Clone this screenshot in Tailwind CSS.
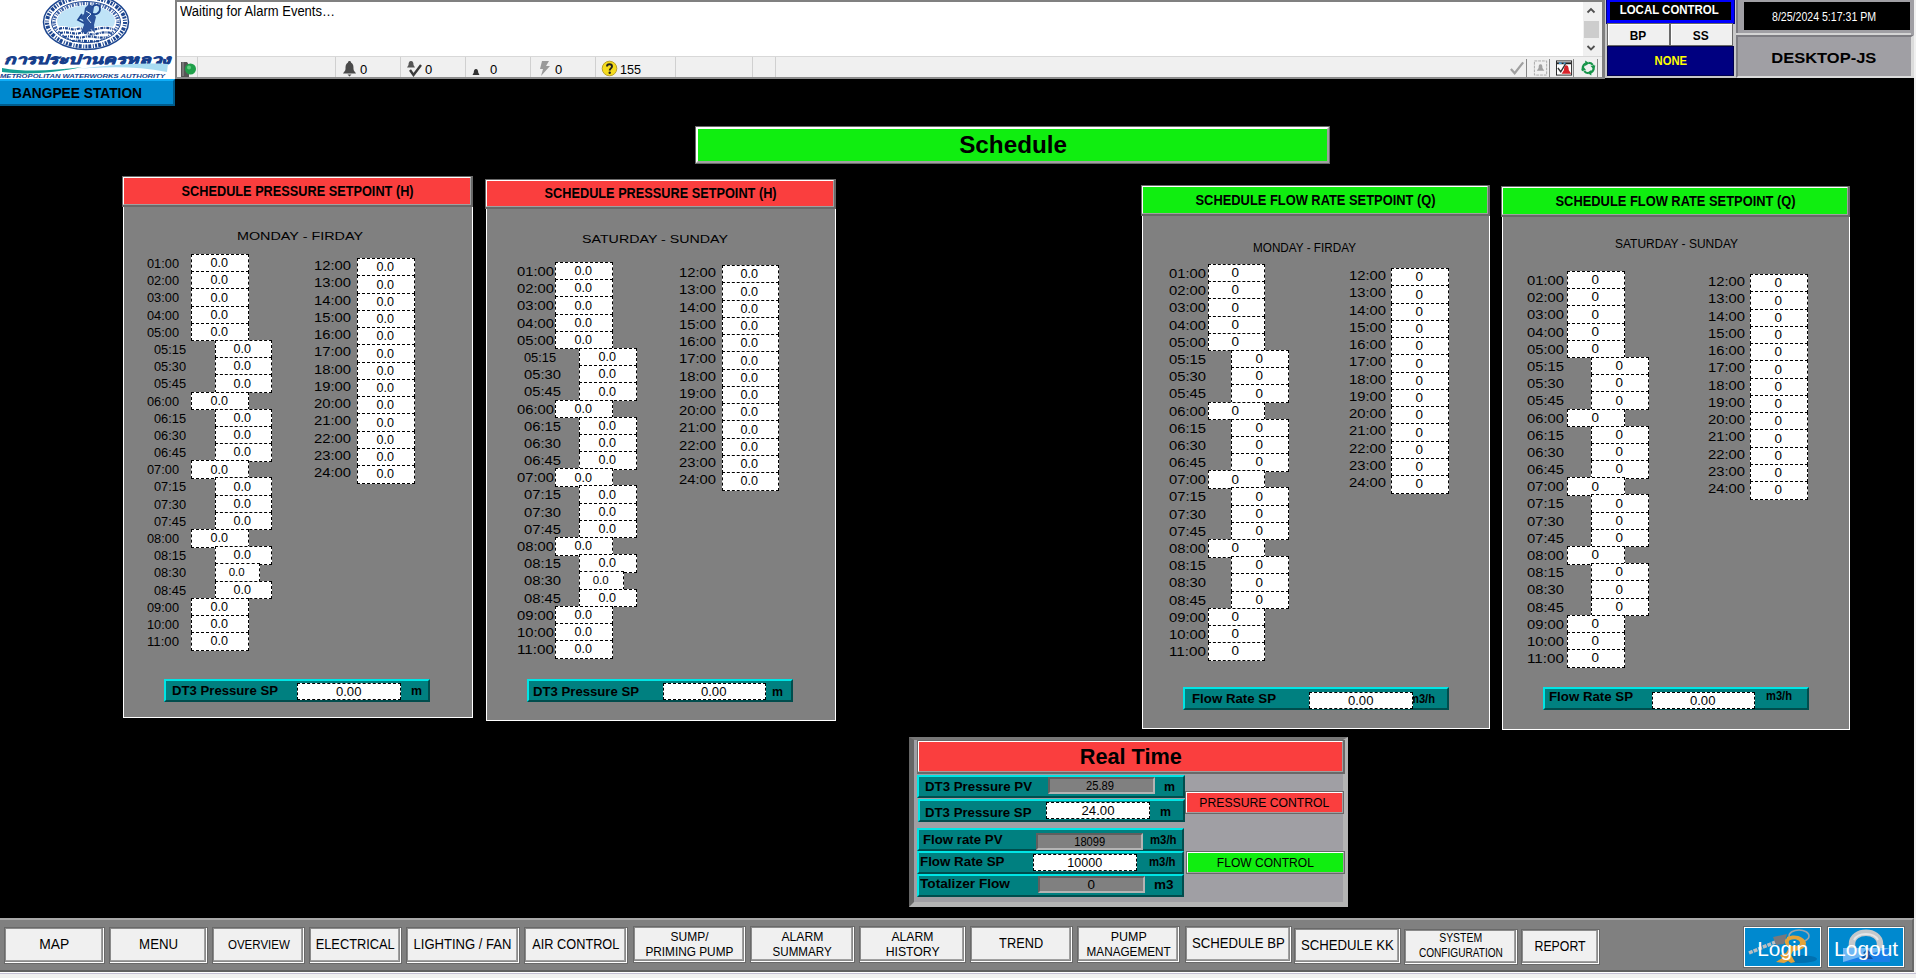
<!DOCTYPE html>
<html lang="en">
<head>
<meta charset="utf-8">
<title>Schedule - Bangpee Station</title>
<script src="https://cdn.jsdelivr.net/npm/@tailwindcss/browser@4"></script>
</head>
<body class="w-[1916px] h-[978px] overflow-hidden bg-[#f0f0f0] font-['Liberation_Sans',Arial,sans-serif] text-black text-xs">
<div class="flex flex-col w-[1914px] h-[972px] bg-black">

  <!-- Top strip -->
  <header class="flex h-[79px] shrink-0 items-start">
    <div class="w-[175px] h-[79px] bg-white overflow-hidden shrink-0">
      <svg width="175" height="79" viewBox="0 0 175 79" font-family="'Liberation Sans','Noto Sans',sans-serif">
        <ellipse cx="86" cy="22" rx="42.5" ry="27.5" fill="#fff" stroke="#1d4690" stroke-width="1.5"/>
        <ellipse cx="86" cy="22" rx="39" ry="24.5" fill="none" stroke="#1d4690" stroke-width="4" stroke-dasharray="2 1.2 1 1.6 3 1"/>
        <ellipse cx="86" cy="22" rx="34.5" ry="20.5" fill="none" stroke="#1d4690" stroke-width="1"/>
        <ellipse cx="86" cy="22" rx="32" ry="18.5" fill="none" stroke="#3d62a6" stroke-width="3.5" stroke-dasharray="1 1 2 1.5"/>
        <ellipse cx="86" cy="21" rx="29" ry="15.5" fill="#bfe3f7"/>
        <path d="M57 27c8-3 12 2 18 0s10 3 16 1 14-3 23-1c-4 10-16 15-28 15s-24-5-29-15z" fill="#fff"/>
        <path d="M59 29c8-3 12 2 18 0s10 3 16 1 13-3 20-1M60 33c8-2 14 2 20 0s10 3 16 1 11-2 16-1M64 37c8-2 14 2 20 0s14 2 22 0M72 41c8-1 18 1 28 0" fill="none" stroke="#1d4690" stroke-width="2.200" stroke-dasharray="3 1 1 1"/>
        <path d="M85 8l4-4 5 3-1 6 3 4-2 8 1 8-4-4-4 4-6-1 3-7-1-5-4-2 5-4z" fill="#2c539b"/>
        <path d="M90 13c6 3 10 0 10-4s-3-6-8-2M82 14l-4 6 6 3" fill="none" stroke="#1d4690" stroke-width="1.8"/>
        <path d="M86 11l5 3-4 4 4 5" fill="none" stroke="#dff0fa" stroke-width="1"/>
        <text x="4" y="63.500" font-size="13" font-weight="700" font-style="italic" fill="#173f8c" stroke="#173f8c" stroke-width=".7" textLength="166" lengthAdjust="spacingAndGlyphs">การประปานครหลวง</text>
        <path d="M2 68c22 4 50 3 80-1-26 6-58 8-80 5z" fill="#14a095"/>
        <path d="M62 70c35-2 62-8 106-6l-1 8c-36-7-66-5-105-2z" fill="#a8dcf2"/>
        <text x="0" y="77.500" font-size="6" font-weight="700" font-style="italic" fill="#173f8c" textLength="165" lengthAdjust="spacingAndGlyphs">METROPOLITAN WATERWORKS AUTHORITY</text>
      </svg>
    </div>

    <!-- Alarm summary -->
    <section class="flex flex-col w-[1430px] h-[79px] shrink-0 bg-[#f0f0f0] border-t-2 border-l-2 border-[#808080] border-b-2 border-b-[#8c8c8c] border-r-[3px]">
      <div class="flex h-[54px]">
        <div class="flex-1 bg-white pl-[3px] pt-[2px] leading-[15px] text-[14px]"><span data-fit="154" class="inline-block whitespace-nowrap origin-left">Waiting for Alarm Events…</span></div>
        <div class="flex flex-col items-center justify-between w-[19px] pr-[3px] bg-[#f0f0f0]">
          <svg width="16" height="17" viewBox="0 0 16 17"><path d="M4.500 10.500L8 7l3.500 3.500" fill="none" stroke="#505050" stroke-width="1.800"/></svg>
          <div class="w-[15px] h-[17px] bg-[#cdcdcd]"></div>
          <svg width="16" height="17" viewBox="0 0 16 17"><path d="M4.500 7L8 10.500 11.500 7" fill="none" stroke="#505050" stroke-width="1.800"/></svg>
        </div>
      </div>
      <div class="flex h-[21px] border-t border-[#d8d8d8] text-[13px] leading-[25px] overflow-hidden">
        <div class="w-[21px] border-r border-[#d0d0d0] pl-[3px] pt-[3px]">
          <svg width="17" height="17" viewBox="0 0 17 17"><path d="M1 2h6l2 3v12H1z" fill="#555"/><path d="M3 2v14" stroke="#999"/><circle cx="10.500" cy="9" r="5.500" fill="#1fa04a"/><circle cx="9" cy="7.500" r="2" fill="#5fd07f"/></svg>
        </div>
        <div class="w-[138px] border-r border-[#d0d0d0]"></div>
        <div class="flex w-[65px] border-r border-[#d0d0d0] pl-[6px]">
          <svg class="mt-[4px]" width="15" height="16" viewBox="0 0 15 16"><path d="M7.500 0c1 0 1.500.7 1.500 1.500C11.500 3 11.500 5 11.500 8c0 2 1.500 2.500 2.500 4.500H1C2 10.500 3.500 10 3.500 8c0-3 0-5 2.500-6.500C6 .7 6.500 0 7.500 0zM5.500 13.500h4L7.500 15.500z" fill="#4a4a4a"/></svg>
          <span class="ml-[3px]">0</span>
        </div>
        <div class="flex w-[65px] border-r border-[#d0d0d0] pl-[6px]">
          <svg class="mt-[4px]" width="15" height="16" viewBox="0 0 15 16"><path d="M4 0c2 0 2.500 2 2.500 4L8 6.500H0L1.500 4C1.500 2 2 0 4 0z" fill="#555"/><path d="M3 9l3.500 5L14 4" fill="none" stroke="#3c3c3c" stroke-width="2.400"/></svg>
          <span class="ml-[3px]">0</span>
        </div>
        <div class="flex w-[65px] border-r border-[#d0d0d0] pl-[6px]">
          <svg class="mt-[4px]" width="15" height="16" viewBox="0 0 15 16"><path d="M4 8c1.800 0 2.200 2 2.200 3.500L7.500 14h-7l1.300-2.500C1.800 10 2.200 8 4 8z" fill="#333"/></svg>
          <span class="ml-[3px]">0</span>
        </div>
        <div class="flex w-[65px] border-r border-[#d0d0d0] pl-[7px]">
          <svg class="mt-[4px]" width="14" height="16" viewBox="0 0 14 16"><path d="M4 0h7L8 5h4L3 15l2-7H2z" fill="#9a9a9a"/></svg>
          <span class="ml-[3px]">0</span>
        </div>
        <div class="flex w-[80px] border-r border-[#d0d0d0] pl-[5px]">
          <svg class="mt-[3px]" width="17" height="17" viewBox="0 0 17 17"><circle cx="8.500" cy="8.500" r="7.300" fill="#f5dc1e" stroke="#b9a02a"/><path d="M6 6.500C6 3.500 11 3.500 11 6.500c0 2-2.300 1.800-2.300 4" fill="none" stroke="#222" stroke-width="1.900"/><circle cx="8.700" cy="12.800" r="1.200" fill="#222"/></svg>
          <span data-fit="20" class="inline-block ml-[2px] origin-left">155</span>
        </div>
        <div class="w-[77px] border-r border-[#d0d0d0]"></div>
        <div class="w-[23px] border-r border-[#d0d0d0]"></div>
        <div class="flex ml-auto gap-[6px] pt-[2px] pr-[4px]">
          <svg class="border-r border-[#888]" width="18" height="18" viewBox="0 0 18 18"><path d="M2 10l4 4.500L15 3" fill="none" stroke="#a0a0a0" stroke-width="2.400"/></svg>
          <svg class="border-r border-[#888]" width="17" height="18" viewBox="0 0 17 18"><rect x="1.500" y="1.500" width="13" height="15" fill="none" stroke="#a8a8a8" stroke-dasharray="3 1"/><path d="M8 5c2 0 2 2 2 4l2 3H4l2-3c0-2 0-4 2-4z" fill="#a0a0a0"/></svg>
          <svg class="border-r border-[#888]" width="18" height="18" viewBox="0 0 18 18"><rect x=".5" y="1.500" width="16" height="15" fill="#fff" stroke="#222"/><path d="M1 4h15" stroke="#222" stroke-width="2"/><path d="M3 4h3m2 0h2" stroke="#4aa3df" stroke-width="1.500"/><path d="M2 9l3 4 5-8" fill="none" stroke="#333" stroke-width="1.500"/><path d="M11 6c2 0 2.500 3 2.500 5l2.500 4H6l2.500-4c0-2 .5-5 2.500-5z" fill="#d8232a"/></svg>
          <svg class="border-r border-[#888]" width="18" height="18" viewBox="0 0 18 18"><path d="M3.500 12A5.800 5.800 0 0 1 6 4.200M14 6a5.800 5.800 0 0 1-2.500 7.800" fill="none" stroke="#169449" stroke-width="2.400"/><path d="M5.500 1v6L10 4zM12 17v-6l-4.500 3z" fill="#169449"/><path d="M9 3.500c2 0 3.500.8 4.600 2.200M9 14.500c-2 0-3.500-.8-4.600-2.200" fill="none" stroke="#169449" stroke-width="2.200"/><path d="M11 6.500h5.500L14 10zM1 11.500h5.500L4 8z" fill="#169449"/></svg>
        </div>
      </div>
    </section>

    <!-- Control mode -->
    <section class="flex flex-col w-[131px] h-[78px] shrink-0 bg-[#c8c8c8] pl-[2px]">
      <div class="flex items-center justify-center w-[127px] h-[23px] bg-black border-[3px] border-t-[2px] border-[#0000ff] outline outline-[#000080] text-white text-[13px] font-bold pb-[2px] pr-[2px]"><span data-fit="98" class="inline-block whitespace-nowrap">LOCAL CONTROL</span></div>
      <div class="flex w-[126px] h-[23px] bg-[#696969] gap-[2px] pt-[1px] px-px text-[13px] font-bold">
        <div class="flex items-center justify-center w-[61px] h-[21px] bg-[#f0f0f0] border-t border-l border-white pt-[2px] pr-[2px]"><span data-fit="15.500" class="inline-block">BP</span></div>
        <div class="flex items-center justify-center w-[61px] h-[21px] bg-[#f0f0f0] border-t border-l border-white pt-[2px] pr-[2px]"><span data-fit="15" class="inline-block">SS</span></div>
      </div>
      <div class="flex items-center justify-center w-[127px] h-[30px] bg-[#000080] border border-[#00004d] text-[#ffff00] text-[13px] font-bold"><span data-fit="31.500" class="inline-block">NONE</span></div>
    </section>

    <!-- Clock and host -->
    <section class="flex flex-col w-[178px] h-[78px] shrink-0 bg-[#a09fa4]">
      <div class="flex h-[33px] border-l-2 border-[#7d7c82] pl-[6px] pt-[2px]">
        <div class="flex items-center justify-center w-[166px] h-[28px] bg-black text-white pt-[2px] pr-[6px]"><span data-fit="103" class="inline-block whitespace-nowrap">8/25/2024 5:17:31 PM</span></div>
      </div>
      <div class="h-[2px] bg-[#d4d4d4] mr-[3px]"></div>
      <div class="flex items-center justify-center h-[43px] border-t-2 border-l-2 border-[#7d7c82] border-b-2 border-b-[#dcdcdc] border-r-[3px] border-r-[#dcdcdc] text-[15px] font-bold pt-[3px] pr-[2px]"><span data-fit="104" class="inline-block whitespace-nowrap">DESKTOP-JS</span></div>
    </section>
  </header>

  <!-- Drawing area -->
  <main class="flex flex-col h-[839px] shrink-0 items-start">
    <div class="flex items-start h-[85px]">
      <div class="flex items-center w-[175px] h-[27px] bg-[#0089cf] border-t-2 border-t-[#10aef8] border-r-2 border-b-2 border-[#005c8c] pl-[12px] font-bold text-[14px] pt-px"><span data-fit="129" class="inline-block whitespace-nowrap origin-left">BANGPEE STATION</span></div>
      <div class="flex items-center justify-center w-[635px] h-[38px] ml-[520px] mt-[47px] bg-[#696969] p-px"><div class="flex items-center justify-center w-full h-full border-2 border-white border-r-[#a0a0a0] border-b-[#a0a0a0] bg-[#10ee10] text-[23px] font-bold pt-px pl-px"><span data-fit="107" class="inline-block">Schedule</span></div></div>
    </div>
    <div id="panels" class="flex items-start h-[566px]"></div>

    <!-- Real time -->
    <section class="ml-[909px] mt-[7px] w-[439px] h-[170px] bg-[#a09fa4] border-l-[5px] border-t-[3px] border-r-[5px] border-b-[5px] border-l-[#666] border-t-[#777] border-r-[#b4b4b4] border-b-[#b4b4b4] pl-[3px]">
      <div class="w-[428px] h-[34px] bg-[#696969] p-px pb-[2px] pr-[2px]"><div class="flex items-center justify-center h-full border border-white border-r-[#a0a0a0] border-b-[#a0a0a0] bg-[#fa3e3e] text-[22px] font-bold"><span data-fit="101" class="inline-block whitespace-nowrap">Real Time</span></div></div>
      <div class="flex">
        <div id="live" class="flex flex-col w-[268px] pt-px shrink-0"></div>
        <div class="flex flex-col pt-[17px] text-[13px]">
          <div class="w-[159px] h-[23px] bg-[#696969] p-px"><div class="flex items-center justify-center h-full border border-white border-r-[#a0a0a0] border-b-[#a0a0a0] bg-[#fa3e3e]"><span data-fit="129" class="inline-block whitespace-nowrap">PRESSURE CONTROL</span></div></div>
          <div class="w-[159px] h-[23px] mt-[37px] ml-px bg-[#696969] p-px"><div class="flex items-center justify-center h-full border border-white border-r-[#a0a0a0] border-b-[#a0a0a0] bg-[#10ee10]"><span data-fit="96" class="inline-block whitespace-nowrap">FLOW CONTROL</span></div></div>
        </div>
      </div>
    </section>
  </main>

  <!-- Navigation -->
  <nav class="flex items-start h-[54px] shrink-0 w-[1914px] bg-[#808080] border-t-2 border-[#a8a8a8] border-b-2 border-b-[#5f5f5f] border-r-2 border-r-[#696969] text-[14px] leading-[15px] text-center">
    <div id="nav" class="flex items-start"></div>
    <div class="flex ml-auto mt-[6px] mr-[7px] gap-[5px]">
      <div class="w-[79px] h-[42px] p-px bg-[#696969]"><div class="grid h-full border border-white bg-[#0089cf] place-items-center overflow-hidden">
        <svg class="col-start-1 row-start-1" width="75" height="38" viewBox="0 0 75 38"><ellipse cx="54" cy="31" rx="18" ry="4" fill="#0070b0"/><ellipse cx="54" cy="8" rx="10" ry="6" fill="none" stroke="#9aa4ab" stroke-width="1.500"/><path d="M4 25L40 10" stroke="#b9bec2" stroke-width="3.500" stroke-dasharray="4 1"/><path d="M28 9l14-3-3 10-8 1z" fill="#78787c"/><path d="M42 9c8-4 18 0 19 6 0 6-8 8-13 8l-2 4 4 7-4 1-3-2-4 2-8-1 6-4-2-3 6-2 3-5c-4-3-6-7-2-10z" fill="#e3a33a"/><path d="M45 12c5-2 10 0 10 3s-6 3-8 3-5-4-2-6z" fill="#0089cf"/></svg>
        <span data-fit="50" class="col-start-1 row-start-1 inline-block text-white text-[21px] leading-none pt-[3px]">Login</span>
      </div></div>
      <div class="w-[78px] h-[42px] p-px bg-[#696969]"><div class="grid h-full border border-white bg-[#0089cf] place-items-center overflow-hidden">
        <svg class="col-start-1 row-start-1" width="74" height="38" viewBox="0 0 74 38"><path d="M23 22v-6c0-15 28-15 28 0v6" fill="none" stroke="#c4c8cb" stroke-width="6.500"/><path d="M25 12c4-8 20-8 24 0" fill="none" stroke="#e4e6e8" stroke-width="2"/><rect x="14" y="20" width="47" height="14" fill="#1b7fe8"/><path d="M14 20h47L14 34z" fill="#6fb8f4"/><path d="M38 21l4 4-2 1 4 5H32l4-5-2-1z" fill="#14509c"/></svg>
        <span data-fit="63" class="col-start-1 row-start-1 inline-block text-white text-[21px] leading-none pt-[3px]">Logout</span>
      </div></div>
    </div>
  </nav>
</div>
<div class="h-px w-[1914px] bg-white"></div>
<div class="h-px w-full bg-[#c4c0d4]"></div>

<script>
const fit = (text, width, cls) => `<span data-fit="${width}" class="inline-block whitespace-nowrap ${cls || ''}">${text}</span>`;

const morning = ['01:00','02:00','03:00','04:00','05:00','05:15','05:30','05:45','06:00','06:15','06:30','06:45','07:00','07:15','07:30','07:45','08:00','08:15','08:30','08:45','09:00','10:00','11:00'];
const evening = ['12:00','13:00','14:00','15:00','16:00','17:00','18:00','19:00','20:00','21:00','22:00','23:00','24:00'];

const panels = [
  { box: 'ml-[122px] mt-[12px] h-[542px] w-[351px]', head: 'h-[31px]', fill: 'bg-[#fa3e3e]', title: 'SCHEDULE PRESSURE SETPOINT (H)', tw: 231,
    day: 'MONDAY - FIRDAY', dayCls: 'ml-[113px] mt-[22px] text-[10px]', dw: 125, v: '0.0', vw: 16.5,
    a: 'mt-[11px] w-[190px]', hour: 'ml-[23px] w-[44px]', hourW: 31, quarter: 'ml-[30px] w-[61px]', quarterW: 31, boxA: 'w-[58px]', boxQ: 'w-[57px]',
    b: 'mt-[15px]', late: 'w-[43px]', boxB: 'w-[58px]', firstQuarterW: 31, short: true,
    sp: 'mb-[15px]', name: 'DT3 Pressure SP', nw: 105, nameCls: 'ml-[6px] w-[125px]', inp: 'w-[104px] mt-[2px]', unit: 'm', uw: 10, unitCls: 'ml-[10px]' },
  { box: 'ml-[12px] mt-[15px] h-[542px] w-[351px]', head: 'h-[30px]', fill: 'bg-[#fa3e3e]', title: 'SCHEDULE PRESSURE SETPOINT (H)', tw: 231,
    day: 'SATURDAY - SUNDAY', dayCls: 'ml-[95px] mt-[23px] text-[10px]', dw: 145, v: '0.0', vw: 16.5,
    a: 'mt-[16px] w-[192px]', hour: 'ml-[30px] w-[38px]', hourW: 36, quarter: 'ml-[37px] w-[55px]', quarterW: 36, boxA: 'w-[58px]', boxQ: 'w-[58px]',
    b: 'mt-[19px]', late: 'w-[43px]', boxB: 'w-[57px]', firstQuarterW: 31, short: true,
    sp: 'mb-[18px]', name: 'DT3 Pressure SP', nw: 105, nameCls: 'ml-[4px] w-[130px] mt-px', inp: 'w-[103px] mt-[2px]', unit: 'm', uw: 10, unitCls: 'ml-[6px] mt-px' },
  { box: 'ml-[305px] mt-[21px] h-[544px] w-[349px]', head: 'h-[31px]', fill: 'bg-[#10ee10]', title: 'SCHEDULE FLOW RATE SETPOINT (Q)', tw: 239,
    day: 'MONDAY - FIRDAY', dayCls: 'ml-[110px] mt-[25px] text-[12px]', dw: 102, v: '0', vw: 6.5,
    a: 'mt-[9px] w-[206px]', hour: 'ml-[26px] w-[39px]', hourW: 36, quarter: 'ml-[26px] w-[62px]', quarterW: 36, boxA: 'w-[57px]', boxQ: 'w-[58px]',
    b: 'mt-[13px]', late: 'w-[42px]', boxB: 'w-[58px]', firstQuarterW: 36,
    sp: 'mb-[18px]', name: 'Flow Rate SP', nw: 83, nameCls: 'ml-[7px] w-[117px]', inp: 'w-[104px] mt-[3px] z-10', unit: 'm3/h', uw: 25, unitCls: '-ml-[4px]' },
  { box: 'ml-[11px] mt-[22px] h-[544px] w-[349px]', head: 'h-[31px]', fill: 'bg-[#10ee10]', title: 'SCHEDULE FLOW RATE SETPOINT (Q)', tw: 239,
    day: 'SATURDAY - SUNDAY', dayCls: 'ml-[112px] mt-[20px] text-[12px]', dw: 122, v: '0', vw: 6.5,
    a: 'mt-[20px] w-[205px]', hour: 'ml-[24px] w-[40px]', hourW: 36, quarter: 'ml-[24px] w-[64px]', quarterW: 36, boxA: 'w-[58px]', boxQ: 'w-[58px]',
    b: 'mt-[23px]', late: 'w-[42px]', boxB: 'w-[58px]', firstQuarterW: 36,
    sp: 'mb-[19px]', name: 'Flow Rate SP', nw: 83, nameCls: 'ml-[4px] w-[103px] -mt-[2px]', inp: 'w-[103px] mt-[3px]', unit: 'm3/h', uw: 25, unitCls: 'ml-[11px] -mt-[3px]' }
];

const cell = (v, w, cls) => `<div class="flex shrink-0 items-center justify-center h-[18.500px] bg-white border border-dashed border-black pr-[2px] ${cls}">${fit(v, w)}</div>`;

const row = (p, t) => {
  const q = !t.endsWith(':00');
  const small = p.short && t === '08:30';
  const w = t === '05:15' ? p.firstQuarterW : q ? p.quarterW : p.hourW;
  return `<div class="flex h-[17.200px]">
    <div class="shrink-0 h-[20px] leading-[20px] ${q ? p.quarter : p.hour}">${fit(t, w, 'origin-left')}</div>
    ${cell(p.v, small ? 15 : p.vw, small ? 'w-[45px] text-[11px]' : q ? p.boxQ : p.boxA)}
  </div>`;
};

document.getElementById('panels').innerHTML = panels.map(p => `
  <section class="flex flex-col shrink-0 ${p.box}">
    <div class="shrink-0 bg-[#696969] p-px pb-[2px] pr-[2px] ${p.head}"><div class="flex items-center justify-center h-full border border-white border-r-[#a0a0a0] border-b-[#a0a0a0] font-bold text-[14px] pl-[2px] ${p.fill}">${fit(p.title, p.tw)}</div></div>
    <div class="flex flex-col flex-1 ml-px bg-[#808080] border border-t-0 border-white">
      <h2 class="h-[14px] leading-[15px] ${p.dayCls}">${fit(p.day, p.dw, 'origin-left')}</h2>
      <div class="flex items-start h-0">
        <div class="shrink-0 ${p.a}">${morning.map(t => row(p, t)).join('')}</div>
        <div class="shrink-0 ${p.b}">${evening.map(t => `<div class="flex h-[17.270px]"><div class="shrink-0 h-[17px] leading-[17px] ${p.late}">${fit(t, 36, 'origin-left')}</div>${cell(p.v, p.vw, p.boxB)}</div>`).join('')}</div>
      </div>
      <div class="flex items-start w-[266px] h-[23px] mt-auto ml-[40px] bg-[#008080] border-2 border-t-[#00e5e5] border-l-[#00e5e5] border-r-[#004d4d] border-b-[#004d4d] ${p.sp}">
        <div class="shrink-0 font-bold leading-[20px] ${p.nameCls}">${fit(p.name, p.nw, 'origin-left')}</div>
        <div class="relative flex shrink-0 items-center justify-center h-[17px] bg-white border border-dashed border-black pr-px ${p.inp}">${fit('0.00', 24.5)}</div>
        <div class="font-bold leading-[20px] ${p.unitCls}">${fit(p.unit, p.uw, 'origin-left')}</div>
      </div>
    </div>
  </section>`).join('');

const pv = 'bg-[#808080] border-2 border-t-[#5f5f5f] border-l-[#5f5f5f] border-r-[#b4b4b4] border-b-[#b4b4b4] w-[107px]';
const sv = 'bg-white border border-dashed border-black w-[104px]';
const live = [
  ['w-[268px] mb-px', 'DT3 Pressure PV', 106, 'ml-[6px] w-[123px]', pv + ' mt-0 pr-[3px]', '25.89', 27, 'm', 10, 'ml-[9px]'],
  ['w-[267px] ml-px mb-[6px]', 'DT3 Pressure SP', 105.5, 'ml-[5px] w-[121px] mt-[2px]', sv + ' mt-px', '24.00', 32, 'm', 10, 'ml-[10px] mt-px'],
  ['w-[267px]', 'Flow rate PV', 78.5, 'ml-[4px] w-[113px]', pv + ' mt-[3px]', '18099', 30, 'm3/h', 25.5, 'ml-[7px]'],
  ['w-[267px]', 'Flow Rate SP', 83.5, 'ml-px w-[113px] -mt-px', sv + ' mt-px', '10000', 34, 'm3/h', 25.5, 'ml-[12px] -mt-px'],
  ['w-[267px]', 'Totalizer Flow', 89, 'ml-px w-[118px] -mt-[2px]', pv + ' mt-0', '0', 6.5, 'm3', 18.5, 'ml-[9px] -mt-px']
];
document.getElementById('live').innerHTML = live.map(r => `
  <div class="flex items-start h-[23px] bg-[#008080] border-2 border-t-[#00e5e5] border-l-[#00e5e5] border-r-[#004d4d] border-b-[#004d4d] ${r[0]}">
    <div class="shrink-0 font-bold leading-[20px] ${r[3]}">${fit(r[1], r[2], 'origin-left')}</div>
    <div class="flex shrink-0 items-center justify-center h-[17px] ${r[4]}">${fit(r[5], r[6])}</div>
    <div class="font-bold leading-[20px] ${r[9]}">${fit(r[7], r[8], 'origin-left')}</div>
  </div>`).join('');

const nav = [
  ['w-[101px] ml-[4px] mt-[7px] h-[37px]', [['MAP', 29]]],
  ['w-[99px] ml-[4px] mt-[7px] h-[37px]', [['MENU', 38]]],
  ['w-[93px] ml-[4px] mt-[7px] h-[37px] text-[13px]', [['OVERVIEW', 61]]],
  ['w-[93px] ml-[4px] mt-[7px] h-[37px]', [['ELECTRICAL', 78]]],
  ['w-[114px] ml-[4px] mt-[7px] h-[37px]', [['LIGHTING / FAN', 97]]],
  ['w-[104px] ml-[4px] mt-[7px] h-[37px]', [['AIR CONTROL', 86]]],
  ['w-[113px] ml-[5px] mt-[6px] h-[37px] text-[13px]', [['SUMP/', 37], ['PRIMING PUMP', 87]]],
  ['w-[105px] ml-[4px] mt-[6px] h-[37px] text-[13px]', [['ALARM', 41], ['SUMMARY', 58]]],
  ['w-[107px] ml-[4px] mt-[6px] h-[37px] text-[13px]', [['ALARM', 41], ['HISTORY', 53]]],
  ['w-[103px] ml-[4px] mt-[6px] h-[37px]', [['TREND', 43]]],
  ['w-[103px] ml-[4px] mt-[6px] h-[37px] text-[13px]', [['PUMP', 35], ['MANAGEMENT', 83]]],
  ['w-[107px] ml-[5px] mt-[6px] h-[37px]', [['SCHEDULE BP', 92]]],
  ['w-[107px] ml-[2px] mt-[8px] h-[36px]', [['SCHEDULE KK', 92]]],
  ['w-[114px] ml-[3px] mt-[9px] h-[36px] text-[12px]', [['SYSTEM', 42], ['CONFIGURATION', 83]]],
  ['w-[79px] ml-[3px] mt-[9px] h-[36px]', [['REPORT', 50]]]
];
document.getElementById('nav').innerHTML = nav.map(([cls, lines]) => `
  <div class="shrink-0 bg-white border border-[#696969] p-px pr-[2px] pb-[2px] ${cls}"><div class="flex flex-col items-center justify-center h-full pl-[2px] bg-[#f0f0f0] border-r border-b border-[#a0a0a0] outline outline-[#8a8a8a]">${lines.map(l => fit(l[0], l[1])).join('')}</div></div>`).join('');

/* Stretch each caption horizontally to its assigned width, again whenever its natural size changes */
const stretch = new ResizeObserver(entries => entries.forEach(({ target, contentRect }) => {
  if (contentRect.width) target.style.transform = `scaleX(${(parseFloat(target.dataset.fit) + 1) / contentRect.width})`;
}));
document.querySelectorAll('[data-fit]').forEach(e => stretch.observe(e));
</script>
</body>
</html>
